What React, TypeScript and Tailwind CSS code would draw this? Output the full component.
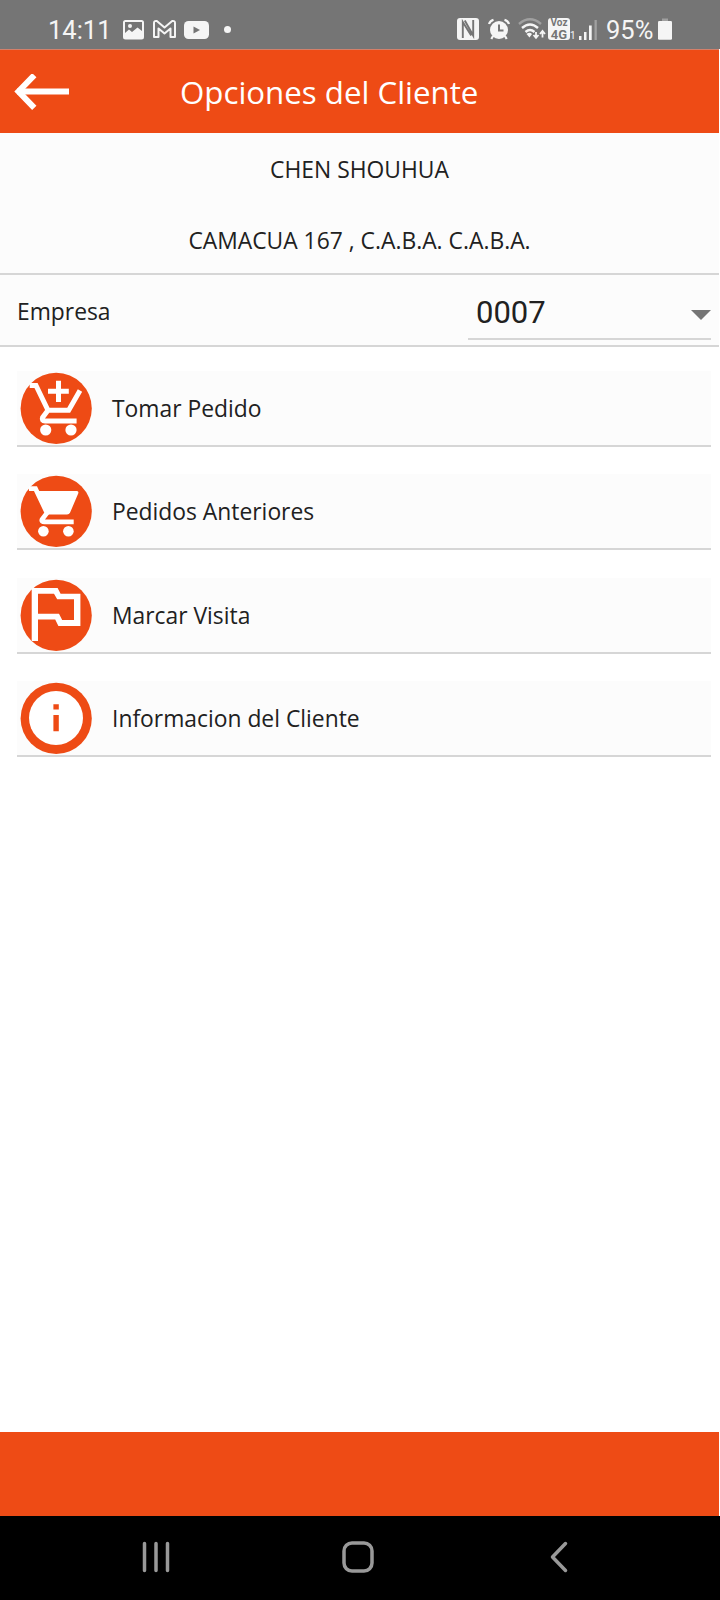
import React from "react";

const CartPlusIcon = () => (
  <svg viewBox="0 0 72 72" className="h-[72px] w-[72px]" fill="none">
    <circle cx="36.2" cy="36.4" r="35.6" fill="#ee4b15" />
    <path
      d="M9.7 13.5H16L28 38.3H48.7L60 18.6M28 38.3L22.6 45.5Q21.3 48.9 25 48.9H56.6"
      stroke="#fff"
      strokeWidth="5"
    />
    <path d="M38.5 8.8V30M28 19.3H48.8" stroke="#fff" strokeWidth="5" />
    <circle cx="25.7" cy="58" r="5.6" fill="#fff" />
    <circle cx="51" cy="58" r="5.6" fill="#fff" />
  </svg>
);

const CartIcon = () => (
  <svg viewBox="0 0 72 72" className="h-[72px] w-[72px]" fill="none">
    <circle cx="36.2" cy="36.4" r="35.6" fill="#ee4b15" />
    <path
      d="M9 13.7H15.5L27 38L22 44.5Q21 46.9 24.6 46.9H53.7"
      stroke="#fff"
      strokeWidth="4.7"
    />
    <path d="M16 16H57Q59 16.3 58.2 18.5L50 37.8Q49.3 39.6 47 39.6H26Z" fill="#fff" />
    <circle cx="23.4" cy="56.2" r="5.3" fill="#fff" />
    <circle cx="48.4" cy="56.2" r="5.3" fill="#fff" />
  </svg>
);

const FlagIcon = () => (
  <svg viewBox="0 0 72 72" className="h-[72px] w-[72px]">
    <circle cx="36.2" cy="36.4" r="35.6" fill="#ee4b15" />
    <path
      d="M11.7 9H37.6L40.6 14.7H60.4V47H38.4L35.2 40.6H18V62H11.7ZM18 14.7V34.7H39L42.2 41H54V20.3H37.2L34 14.7Z"
      fill="#fff"
      fillRule="evenodd"
    />
  </svg>
);

const InfoIcon = () => (
  <svg viewBox="0 0 72 72" className="h-[72px] w-[72px]">
    <circle cx="36.2" cy="36.4" r="35.6" fill="#ee4b15" />
    <circle cx="36" cy="36" r="27" fill="#fff" />
    <path d="M33.4 22.2H38.8V27.6H33.4ZM33.4 33H38.8V49.2H33.4Z" fill="#ee4b15" />
  </svg>
);

const options = [
  { label: "Tomar Pedido", icon: <CartPlusIcon /> },
  { label: "Pedidos Anteriores", icon: <CartIcon /> },
  { label: "Marcar Visita", icon: <FlagIcon /> },
  { label: "Informacion del Cliente", icon: <InfoIcon /> },
];

const StatusBar = () => (
  <div className="flex h-[49px] shrink-0 items-start bg-[#757575] pt-[18px] pl-12 font-[Roboto,sans-serif] text-[25.5px] leading-[24px] text-[#f5f5f5]">
    <span className="w-[75px]">14:11</span>
    <svg width="21" height="22" viewBox="0 0 21 22" className="mr-[9px]">
      <path
        d="M2.5 2H18.5Q21 2 21 4.5V19Q21 21.5 18.5 21.5H2.5Q0 21.5 0 19V4.5Q0 2 2.5 2ZM2 4V15L6 11.5L9 14L14.5 9.5L19 13V4Z"
        fill="#f5f5f5"
        fillRule="evenodd"
      />
      <circle cx="7" cy="8" r="2" fill="#f5f5f5" />
    </svg>
    <svg width="23" height="22" viewBox="0 0 23 22" className="mr-2" fill="none">
      <path
        d="M1 19V5Q1 2.5 3.8 3L11.5 9.5L19.2 3Q22 2.5 22 5V19H17.5V10.5L11.5 15.5L5.5 10.5V19Z"
        stroke="#f5f5f5"
        strokeWidth="2"
        strokeLinejoin="round"
      />
    </svg>
    <svg width="25" height="22" viewBox="0 0 25 22" className="mr-[15px]">
      <rect y="3" width="25" height="18" rx="4.5" fill="#f5f5f5" />
      <path d="M9.5 8.5V15.5L16 12Z" fill="#757575" />
    </svg>
    <span className="mt-2 h-[7px] w-[7px] rounded-full bg-[#f5f5f5]" />
    <svg width="22" height="22" viewBox="0 0 22 22" className="mr-[9px] ml-[226px]" fill="none">
      <rect width="22" height="22" rx="3" fill="#f5f5f5" />
      <path d="M5.8 20V4L14.2 17.5M7.8 2.5L16.2 17.5V2" stroke="#757575" strokeWidth="1.9" />
    </svg>
    <svg width="22" height="22" viewBox="0 0 22 22" className="mr-[8px]" fill="none">
      <circle cx="11" cy="12" r="9" fill="#f5f5f5" />
      <path d="M1 6Q2 3 5.5 1.8M21 6Q20 3 16.5 1.8M5 18L3.3 21M17 18L18.7 21" stroke="#f5f5f5" strokeWidth="2.2" />
      <path d="M11 6.5V12.5H15.5" stroke="#757575" strokeWidth="2" />
    </svg>
    <svg width="28" height="22" viewBox="0 0 28 22" className="mr-[2px]" fill="none">
      <path d="M1 6Q12 -3.5 23 6" stroke="#a0a0a0" strokeWidth="2.4" />
      <path d="M4 10Q12 3 20 10M7.5 14Q12 10 16.5 14" stroke="#f5f5f5" strokeWidth="2.4" />
      <path d="M8.5 16Q11.5 13.5 14 16L11.5 19.5Z" fill="#f5f5f5" />
      <path d="M18 14V19.5M15.5 17L18 19.8L20.5 17M24.5 19.5V13M22 16L24.5 13L27 16" stroke="#f5f5f5" strokeWidth="1.8" />
    </svg>
    <div className="flex h-[22px] w-[22px] flex-col items-center rounded-[3px] bg-[#f5f5f5] font-bold text-[#757575]">
      <span className="h-[10px] text-[10px] leading-[10px]">Voz</span>
      <span className="text-[13px] leading-[13px]">4G</span>
    </div>
    <span className="mt-[14px] w-[9px] text-[10px] leading-[8px]">1</span>
    <svg width="18" height="22" viewBox="0 0 18 22" className="mr-[9px]">
      <path d="M0 18H2.5V22H0ZM5 14H7.5V22H5ZM10 7.5H12.7V22H10Z" fill="#f5f5f5" />
      <path d="M15.5 2H17.8V22H15.5Z" fill="#a0a0a0" />
    </svg>
    <span className="w-[52px]">95%</span>
    <svg width="14" height="22" viewBox="0 0 14 22">
      <path d="M4 0.5H10V4H4Z" fill="#a0a0a0" />
      <rect y="3" width="14" height="18.8" rx="1.2" fill="#f5f5f5" />
    </svg>
  </div>
);

const App = () => {
  return (
    <div className="flex h-[1600px] w-[720px] flex-col overflow-hidden bg-white font-['Open_Sans',sans-serif] text-[22.85px] text-[#212121]">
      <StatusBar />
      <header className="mr-px flex h-[84px] shrink-0 items-center border-t border-[#d4806a] bg-[#ee4b15] pl-[14px] text-white">
        <svg width="55" height="36" viewBox="0 0 55 36" fill="none" stroke="#fff">
          <path d="M3 17.5H55" strokeWidth="6" />
          <path d="M20.3 1.2L4.5 17.5L20.3 33.8" strokeWidth="6" />
        </svg>
        <h1 className="ml-[111px] text-[31.25px] leading-[44px]">Opciones del Cliente</h1>
      </header>

      <main className="flex flex-1 flex-col">
        <section className="mr-px flex h-[142px] flex-col items-center border-b-2 border-[#d6d6d6] bg-[#fcfcfc] pt-[21px]">
          <p className="h-[71px] leading-[32px]">CHEN SHOUHUA</p>
          <p className="leading-[32px]">CAMACUA 167 , C.A.B.A. C.A.B.A.</p>
        </section>
        <section className="mr-px flex h-[72px] justify-between border-b-2 border-[#d6d6d6] bg-[#fcfcfc] pr-2 pl-[17px]">
          <label className="pt-[21px] leading-[32px]">Empresa</label>
          <div className="mb-[5px] flex w-[243px] items-center justify-between border-b-2 border-[#d6d6d6] pt-[9px] pl-2">
            <span className="pt-1 font-[Roboto,sans-serif] text-[31px] leading-[44px]">0007</span>
            <svg width="20" height="10" viewBox="0 0 20 10" className="mt-[7px]">
              <path d="M0 0H20L10 10Z" fill="#757575" />
            </svg>
          </div>
        </section>

        <ul className="mt-6 ml-[17px] flex w-[694px] flex-col gap-[27.3px]">
          {options.map((option) => (
            <li
              key={option.label}
              className="flex h-[76px] items-center border-b-2 border-[#d6d6d6] bg-[#fcfcfc] pl-[3px]"
            >
              {option.icon}
              <span className="ml-5 pt-[2px] leading-[32px]">{option.label}</span>
            </li>
          ))}
        </ul>
      </main>

      <footer className="mr-px h-[84px] shrink-0 bg-[#ee4b15]" />
      <nav className="flex h-[84px] shrink-0 items-start bg-black pt-[25px]">
        <svg width="28" height="32" viewBox="0 0 28 32" className="ml-[142px]" stroke="#999" strokeWidth="3.5" strokeLinecap="round">
          <path d="M2.5 2.5V29.5M14 2.5V29.5M25.5 2.5V29.5" />
        </svg>
        <svg width="32" height="32" viewBox="0 0 32 32" className="ml-[172px]" fill="none">
          <rect x="2" y="2" width="28" height="28" rx="8" stroke="#999" strokeWidth="3.5" />
        </svg>
        <svg width="18" height="32" viewBox="0 0 18 32" className="ml-[176px]" fill="none" stroke="#999" strokeWidth="3.5" strokeLinecap="round" strokeLinejoin="round">
          <path d="M15.5 2.5L2.5 16L15.5 29.5" />
        </svg>
      </nav>
    </div>
  );
};

export default App;
